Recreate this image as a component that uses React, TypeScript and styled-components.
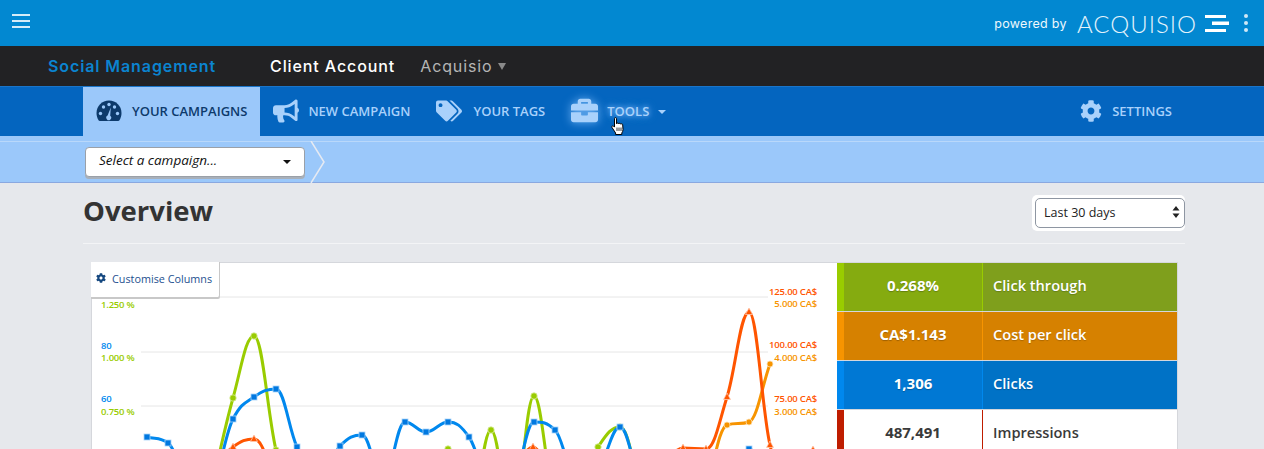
import React from "react";
import styled, { createGlobalStyle } from "styled-components";
import { FaBullhorn, FaTags, FaBriefcase, FaCog } from "react-icons/fa";

type Point = [number, number];

const BLUE: Point[] = [
  [147, 437], [168, 443], [190, 480], [211, 480], [233, 419], [254, 397], [276, 389], [297, 447],
  [318, 480], [340, 446], [362, 435], [383, 480], [405, 422], [426, 432], [448, 422], [469, 437],
  [490, 480], [512, 480], [534, 422], [555, 430], [577, 480], [598, 470], [620, 427], [641, 480],
  [727, 490], [749, 449], [770, 490],
];
const GREEN: Point[] = [
  [211, 490], [233, 398], [254, 336], [276, 450], [297, 520], [318, 540], [405, 540], [426, 520],
  [448, 449], [469, 520], [491, 430], [512, 520], [534, 396], [555, 490], [577, 490], [598, 447],
  [620, 427], [641, 490],
];
const RED: Point[] = [
  [211, 470], [233, 447], [254, 439], [276, 480], [297, 520], [490, 520], [512, 480], [533, 447],
  [555, 480], [662, 470], [683, 448], [706, 449], [727, 397], [749, 312], [770, 445], [792, 500], [813, 450],
];
const ORANGE: Point[] = [
  [706, 490], [727, 425], [749, 422], [770, 364],
];

// same control point maths as a Highcharts spline, extremes stay flat
const controls = (prev: Point, p: Point, next: Point) => {
  const leftX = (1.5 * p[0] + prev[0]) / 2.5;
  const rightX = (1.5 * p[0] + next[0]) / 2.5;
  let leftY = (1.5 * p[1] + prev[1]) / 2.5;
  let rightY = (1.5 * p[1] + next[1]) / 2.5;
  const correction = ((rightY - leftY) * (rightX - p[0])) / (rightX - leftX) + p[1] - rightY;
  leftY += correction;
  rightY += correction;
  if (leftY > prev[1] && leftY > p[1]) {
    leftY = Math.max(prev[1], p[1]);
    rightY = 2 * p[1] - leftY;
  } else if (leftY < prev[1] && leftY < p[1]) {
    leftY = Math.min(prev[1], p[1]);
    rightY = 2 * p[1] - leftY;
  }
  if (rightY > next[1] && rightY > p[1]) {
    rightY = Math.max(next[1], p[1]);
    leftY = 2 * p[1] - rightY;
  } else if (rightY < next[1] && rightY < p[1]) {
    rightY = Math.min(next[1], p[1]);
    leftY = 2 * p[1] - rightY;
  }
  return { leftX, leftY, rightX, rightY };
};

const smooth = (pts: Point[]) => {
  let d = `M${pts[0][0]} ${pts[0][1]}`;
  for (let i = 0; i < pts.length - 1; i++) {
    const a = controls(pts[Math.max(i - 1, 0)], pts[i], pts[i + 1]);
    const b = controls(pts[i], pts[i + 1], pts[Math.min(i + 2, pts.length - 1)]);
    d += ` C${a.rightX} ${a.rightY} ${b.leftX} ${b.leftY} ${pts[i + 1][0]} ${pts[i + 1][1]}`;
  }
  return d;
};

const LEFT_LABELS = [
  { y: 308, text: "1.250 %", color: "#99cc00" },
  { y: 349, text: "80", color: "#0088ee" },
  { y: 361, text: "1.000 %", color: "#99cc00" },
  { y: 402, text: "60", color: "#0088ee" },
  { y: 415, text: "0.750 %", color: "#99cc00" },
];

const RIGHT_LABELS = [
  { y: 295, text: "125.00 CA$", color: "#ff5500" },
  { y: 307, text: "5.000 CA$", color: "#f79400" },
  { y: 348, text: "100.00 CA$", color: "#ff5500" },
  { y: 361, text: "4.000 CA$", color: "#f79400" },
  { y: 402, text: "75.00 CA$", color: "#ff5500" },
  { y: 415, text: "3.000 CA$", color: "#f79400" },
];

const METRICS = [
  { value: "0.268%", label: "Click through", stripe: "#99cc00", cell: "#85ab10", side: "#7f9f1c" },
  { value: "CA$1.143", label: "Cost per click", stripe: "#f79400", cell: "#d68100", side: "#d68100" },
  { value: "1,306", label: "Clicks", stripe: "#0088ee", cell: "#0078d4", side: "#0072c6" },
  { value: "487,491", label: "Impressions", stripe: "#bf1d00", cell: "#ffffff", side: "#ffffff", plain: true },
];

const GaugeIcon = () => (
  <svg width="26" height="21" viewBox="0 0 26 21">
    <path
      d="M13 0.5C6 0.5 0.5 6 0.5 13c0 2.6.7 5 2 7.2.3.5.8.8 1.4.8h18.2c.6 0 1.1-.3 1.4-.8 1.3-2.2 2-4.6 2-7.2C25.500 6 20 .5 13 .5z"
      fill="currentColor"
    />
    <g fill="#9bc8fa">
      <circle cx="4.500" cy="13.500" r="1.700" />
      <circle cx="7.500" cy="7" r="1.700" />
      <circle cx="13" cy="4.500" r="1.700" />
      <circle cx="18.500" cy="7" r="1.700" />
      <circle cx="21.500" cy="13.500" r="1.700" />
      <path d="M14.800 7.500l-.6 8.300a2.400 2.400 0 1 1-2.600-.2z" />
    </g>
  </svg>
);

const HandCursor = () => (
  <svg width="14" height="19" viewBox="0 0 14 19">
    <path
      d="M3.500 1.600c0-1.300 2-1.300 2 0v5.200c.3-1 2-1 2.200.1.300-.9 1.900-.8 2.100.3.400-.7 1.800-.5 1.900.6l.3 4.700c0 1.400-.5 2.500-1.200 3.500v1.500H4.600v-1.500L1 10.500c-.7-1.100.6-2.200 1.500-1.400l1 1z"
      fill="#fff"
      stroke="#000"
      strokeWidth="1"
      strokeLinejoin="round"
    />
    <path d="M6 10.500v3.500M8 10.500v3.500M10 10.500v3.500" stroke="#000" strokeWidth="0.800" />
  </svg>
);

const App = () => {
  return (
    <Page>
      <GlobalStyle />
      <TopBar>
        <Burger>
          <span />
          <span />
          <span />
        </Burger>
        <PoweredBy>powered by</PoweredBy>
        <LogoText>ACQUISIO</LogoText>
        <svg width="24" height="17" viewBox="0 0 24 17">
          <path d="M0 0h21v3H0zM7 6.500h17v3.500H7zM0 14h21v3H0z" fill="#fff" />
        </svg>
        <Kebab>
          <span />
          <span />
          <span />
        </Kebab>
      </TopBar>

      <AccountBar>
        <ProductName>Social Management</ProductName>
        <ClientLabel>Client Account</ClientLabel>
        <ClientName>Acquisio</ClientName>
        <ClientCaret />
      </AccountBar>

      <NavBar>
        <NavItem $gap={10} $active>
          <GaugeIcon />
          YOUR CAMPAIGNS
        </NavItem>
        <NavItem>
          <FaBullhorn size={26} />
          NEW CAMPAIGN
        </NavItem>
        <NavItem $gap={11}>
          <FaTags size={26} />
          YOUR TAGS
        </NavItem>
        <NavItem $glow>
          <FaBriefcase size={27} />
          <span>TOOLS</span>
          <NavCaret />
          <CursorSpot>
            <HandCursor />
          </CursorSpot>
        </NavItem>
        <NavSpacer />
        <NavItem $gap={10}>
          <FaCog size={22} />
          SETTINGS
        </NavItem>
      </NavBar>

      <CrumbBar>
        <CrumbSelect>
          Select a campaign...
          <SelectCaret />
        </CrumbSelect>
        <svg width="16" height="42" viewBox="0 0 16 42">
          <path d="M1 0l13 21L1 42" fill="none" stroke="#e6eaf2" strokeWidth="1.500" />
        </svg>
      </CrumbBar>

      <Main>
        <TitleRow>
          <Title>Overview</Title>
          <RangeRing>
            <RangeSelect>
              Last 30 days
              <svg width="8" height="12" viewBox="0 0 8 12">
                <path d="M4 0l3.500 4.500h-7zM4 12L.5 7.500h7z" fill="#222" />
              </svg>
            </RangeSelect>
          </RangeRing>
        </TitleRow>

        <Card>
          <ChartArea>
            <CustomiseTab>
              <FaCog size={10} />
              Customise Columns
            </CustomiseTab>
            <ChartSvg viewBox="91 263 746 186">
              {[297, 352, 406].map((y) => (
                <line key={y} x1={y === 297 ? 220 : 141} x2="768" y1={y} y2={y} stroke="#e6e6e6" />
              ))}
              {LEFT_LABELS.map((l) => (
                <AxisText key={l.text} x="101" y={l.y} fill={l.color}>
                  {l.text}
                </AxisText>
              ))}
              {RIGHT_LABELS.map((l) => (
                <AxisText key={l.text} x="817" y={l.y} fill={l.color} textAnchor="end">
                  {l.text}
                </AxisText>
              ))}

              <Curve d={smooth(GREEN)} stroke="#99cc00" />
              <Curve d={smooth(ORANGE)} stroke="#f79400" />
              <Curve d={smooth(RED)} stroke="#ff5500" />
              <Curve d={smooth(BLUE)} stroke="#0088ee" />

              {GREEN.map(([x, y]) => (
                <circle key={x} cx={x} cy={y} r="3.200" fill="#99cc00" stroke="#d8eb99" strokeWidth="0.800" />
              ))}
              {ORANGE.map(([x, y]) => (
                <circle key={x} cx={x} cy={y} r="3" fill="#f79400" stroke="#fde0b0" strokeWidth="0.800" />
              ))}
              {RED.map(([x, y]) => (
                <path key={x} d={`M${x} ${y - 4}l3.500 6.500h-7z`} fill="#ff5500" stroke="#ffc9b0" strokeWidth="0.800" />
              ))}
              {BLUE.map(([x, y]) => (
                <rect key={x} x={x - 3} y={y - 3} width="6" height="6" fill="#0078e0" stroke="#a8d4fa" strokeWidth="0.800" />
              ))}
            </ChartSvg>
          </ChartArea>

          <MetricList>
            {METRICS.map((m) => (
              <MetricRow key={m.label} $plain={m.plain}>
                <MetricValue $stripe={m.stripe} $bg={m.cell} $plain={m.plain}>
                  {m.value}
                </MetricValue>
                <MetricLabel $bg={m.side} $line={m.stripe} $plain={m.plain}>
                  {m.label}
                </MetricLabel>
              </MetricRow>
            ))}
          </MetricList>
        </Card>
      </Main>
    </Page>
  );
};

const GlobalStyle = createGlobalStyle`
  html, body {
    margin: 0;
    padding: 0;
    background: #e6e8ec;
    overflow: hidden;
  }

  * {
    box-sizing: border-box;
  }
`;

const Page = styled.div`
  height: 449px;
  overflow: hidden;
  font-family: "Open Sans", "Noto Sans", sans-serif;
  background: #e6e8ec;
`;

const TopBar = styled.header`
  display: flex;
  align-items: center;
  height: 46px;
  padding: 0 16px 0 12px;
  background: #0288d1;
  color: #fff;
`;

const Burger = styled.div`
  display: flex;
  flex-direction: column;
  gap: 4px;
  width: 18px;
  margin-top: -4px;
  margin-right: auto;

  span {
    display: block;
    height: 2px;
    background: #d5ecf8;
  }
`;

const PoweredBy = styled.span`
  font-family: "Inter", sans-serif;
  font-size: 12.500px;
  letter-spacing: 0.3px;
  color: #eef8fd;
  margin-right: 10px;
`;

const LogoText = styled.span`
  font-family: "Lato", sans-serif;
  font-weight: 300;
  font-size: 24px;
  letter-spacing: 1px;
  margin-right: 8px;
  color: #e4f3fb;
`;

const Kebab = styled.div`
  display: flex;
  flex-direction: column;
  gap: 3px;
  margin-left: 15px;

  span {
    width: 4px;
    height: 4px;
    border-radius: 50%;
    background: #cfe8f6;
  }
`;

const AccountBar = styled.div`
  display: flex;
  align-items: center;
  height: 40px;
  padding-left: 48px;
  background: #222224;
  font-family: "Inter", sans-serif;
  font-size: 16px;
  letter-spacing: 0.9px;
`;

const ProductName = styled.span`
  width: 222px;
  font-weight: 600;
  color: #0b84d0;
`;

const ClientLabel = styled.span`
  font-weight: 500;
  color: #fff;
  margin-right: 25px;
`;

const ClientName = styled.span`
  color: #b5b5b5;
  margin-right: 5px;
`;

const ClientCaret = styled.span`
  width: 0;
  height: 0;
  border-left: 4px solid transparent;
  border-right: 4px solid transparent;
  border-top: 7px solid #8a8a8a;
`;

const NavBar = styled.nav`
  display: flex;
  align-items: stretch;
  height: 50px;
  padding: 0 79px 0 83px;
  background: #0465bf;
  border-top: 1px solid #1a75c9;
`;

const NavSpacer = styled.div`
  flex: 1;
`;

const NavItem = styled.a<{ $active?: boolean; $glow?: boolean; $gap?: number }>`
  position: relative;
  display: flex;
  align-items: center;
  gap: ${({ $gap }) => $gap ?? 9}px;
  padding: 0 13px 2px;
  font-size: 13px;
  font-weight: 600;
  white-space: nowrap;
  background: ${({ $active }) => ($active ? "#9bc8fa" : "transparent")};
  color: ${({ $active }) => ($active ? "#0d3a6b" : "#a9d1fb")};
  text-shadow: ${({ $glow }) => ($glow ? "0 0 5px #6fb2f5, 0 0 8px #6fb2f5" : "none")};

  svg {
    flex: none;
    filter: ${({ $glow }) => ($glow ? "drop-shadow(0 0 5px #6fb2f5)" : "none")};
  }
`;

const NavCaret = styled.span`
  width: 0;
  height: 0;
  margin-top: 2px;
  border-left: 4px solid transparent;
  border-right: 4px solid transparent;
  border-top: 4px solid #a9d1fb;
`;

const CursorSpot = styled.span`
  position: absolute;
  left: 53px;
  top: 30px;
  display: flex;

  svg {
    filter: none;
  }
`;

const CrumbBar = styled.div`
  display: flex;
  align-items: center;
  gap: 5px;
  height: 47px;
  padding: 5px 0 0 85px;
  background: #9bc8fa;
  border-bottom: 1px solid #8aa8e0;
  box-shadow: inset 0 5px 0 #9bc8fa, inset 0 6px 0 #b9d8fa;
`;

const CrumbSelect = styled.div`
  display: flex;
  align-items: center;
  justify-content: space-between;
  width: 220px;
  height: 30px;
  padding: 0 13px 3px;
  background: #fff;
  border: 1px solid #9aa0a8;
  border-radius: 4px;
  box-shadow: 0 2px 0 #a8b0ba;
  font-size: 13.500px;
  font-style: italic;
  font-weight: 500;
  color: #111;
`;

const SelectCaret = styled.span`
  width: 0;
  height: 0;
  margin-top: 3px;
  border-left: 4px solid transparent;
  border-right: 4px solid transparent;
  border-top: 4px solid #111;
`;

const Main = styled.main`
  width: 1102px;
  margin-left: 83px;
`;

const TitleRow = styled.div`
  display: flex;
  align-items: center;
  justify-content: space-between;
  height: 61px;
  border-bottom: 1px solid #f3f4f6;
`;

const Title = styled.h1`
  margin: -6px 0 0;
  font-size: 27.500px;
  font-weight: 700;
  color: #333;
`;

const RangeRing = styled.div`
  padding: 3px 0 3px 3px;
  background: #fff;
  border-radius: 5px;
`;

const RangeSelect = styled.div`
  display: flex;
  align-items: center;
  justify-content: space-between;
  width: 150px;
  height: 30px;
  padding: 0 4px 2px 8px;
  background: #fff;
  border: 1px solid #8e96a2;
  border-radius: 5px;
  font-size: 12.500px;
  font-weight: 500;
  color: #222;
`;

const Card = styled.section`
  display: flex;
  width: 1087px;
  height: 300px;
  margin: 18px 0 0 8px;
  background: #fff;
  border: 1px solid #d5d7dc;
  border-bottom: 0;
`;

const ChartArea = styled.div`
  position: relative;
  width: 745px;
  flex: none;
`;

const CustomiseTab = styled.div`
  position: absolute;
  z-index: 1;
  left: -1px;
  top: -1px;
  display: flex;
  align-items: center;
  gap: 6px;
  width: 129px;
  height: 35px;
  padding: 0 0 3px 5px;
  background: #fff;
  border-right: 1px solid #c8c8c8;
  box-shadow: 0 2px 0 #c8c8c8;
  border-bottom-right-radius: 2px;
  font-size: 10.800px;
  font-weight: 500;
  color: #1d4f8f;

  svg {
    color: #14477f;
  }
`;

const ChartSvg = styled.svg`
  display: block;
  width: 746px;
  height: 186px;
  margin-left: -1px;
`;

const AxisText = styled.text`
  font-family: "Open Sans", sans-serif;
  font-size: 9.500px;
  font-weight: 600;
  letter-spacing: -0.2px;
`;

const Curve = styled.path`
  fill: none;
  stroke-width: 3px;
`;

const MetricList = styled.div`
  display: flex;
  flex-direction: column;
  gap: 1px;
  flex: 1;
  background: #d5d7dc;
`;

const MetricRow = styled.div<{ $plain?: boolean }>`
  display: flex;
  height: ${({ $plain }) => ($plain ? "120px" : "48px")};
`;

const MetricValue = styled.div<{ $stripe: string; $bg: string; $plain?: boolean }>`
  width: 145px;
  padding-top: 12px;
  text-align: center;
  background: ${({ $bg }) => $bg};
  border-left: 7px solid ${({ $stripe }) => $stripe};
  font-size: 15px;
  font-weight: 700;
  color: ${({ $plain }) => ($plain ? "#3a3a3a" : "#fff")};
  text-shadow: ${({ $plain }) => ($plain ? "none" : "0 1px 1px rgba(0, 0, 0, 0.25)")};
`;

const MetricLabel = styled.div<{ $bg: string; $line: string; $plain?: boolean }>`
  flex: 1;
  padding: 12px 0 0 10px;
  background: ${({ $bg }) => $bg};
  border-left: 1px solid ${({ $line }) => $line};
  font-size: 14.600px;
  font-weight: 600;
  color: ${({ $plain }) => ($plain ? "#3a3a3a" : "#fff")};
  text-shadow: ${({ $plain }) => ($plain ? "none" : "0 1px 1px rgba(0, 0, 0, 0.2)")};
`;

export default App;
